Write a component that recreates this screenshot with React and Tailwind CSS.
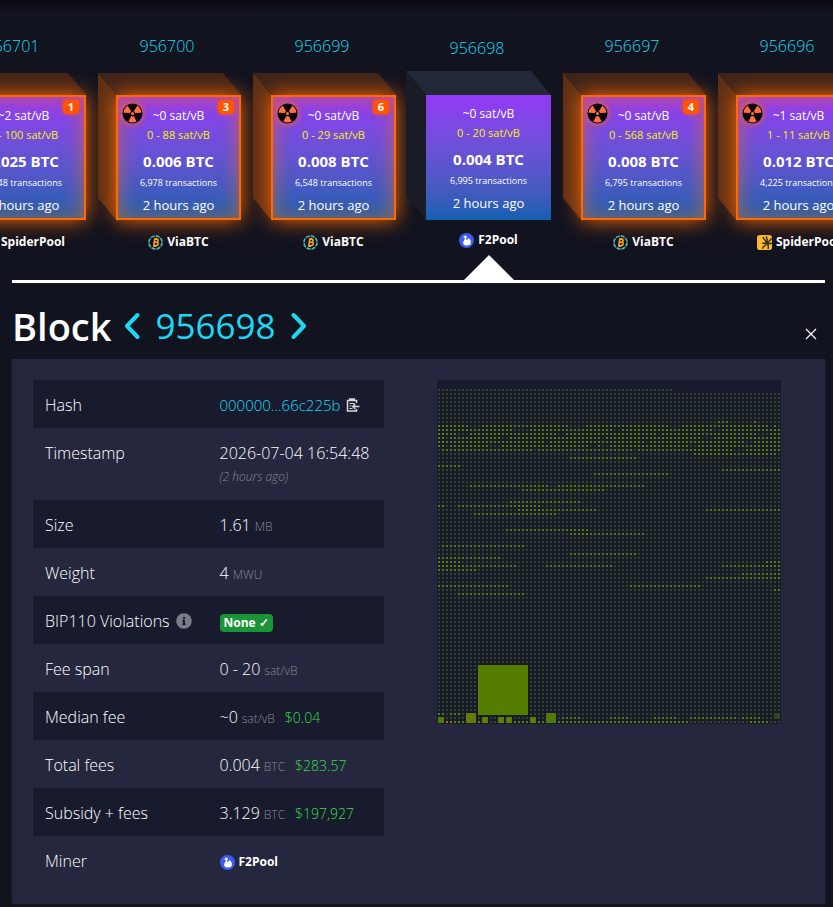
import React from 'react';
import { FaInfoCircle } from 'react-icons/fa';

const blocks = [
  { height: 956701, median: '~2', span: '0 - 100', reward: '0.025', txs: '5,148', pool: 'SpiderPool', violations: 1 },
  { height: 956700, median: '~0', span: '0 - 88', reward: '0.006', txs: '6,978', pool: 'ViaBTC', violations: 3 },
  { height: 956699, median: '~0', span: '0 - 29', reward: '0.008', txs: '6,548', pool: 'ViaBTC', violations: 6 },
  { height: 956698, median: '~0', span: '0 - 20', reward: '0.004', txs: '6,995', pool: 'F2Pool', violations: 0 },
  { height: 956697, median: '~0', span: '0 - 568', reward: '0.008', txs: '6,795', pool: 'ViaBTC', violations: 4 },
  { height: 956696, median: '~1', span: '1 - 11', reward: '0.012', txs: '4,225', pool: 'SpiderPool', violations: 2 },
];

// Block overview: an 86 x 86 grid, runs are [row, first column, last column]
const CELLS = 86;
const brightRuns = [
  [10, 70, 72], [10, 79, 79],
  [11, 0, 7], [11, 11, 32], [11, 37, 57], [11, 61, 82], [11, 84, 84],
  [12, 0, 18], [12, 23, 43], [12, 46, 68], [12, 71, 85],
  [13, 0, 4], [13, 8, 29], [13, 32, 54], [13, 56, 79], [13, 83, 85],
  [14, 0, 1], [14, 3, 15], [14, 18, 40], [14, 42, 65], [14, 69, 85],
  [15, 0, 26], [15, 28, 51], [15, 53, 76], [15, 79, 85],
  [16, 0, 1], [16, 3, 12], [16, 16, 37], [16, 40, 40], [16, 43, 62], [16, 65, 85],
  [17, 1, 23], [17, 25, 48], [17, 50, 73], [17, 77, 85],
  [18, 64, 84],
  [19, 33, 49],
  [21, 0, 5],
  [22, 71, 85],
  [23, 39, 57],
  [26, 8, 27], [26, 30, 51],
  [27, 21, 41],
  [30, 18, 35],
  [31, 0, 1], [31, 5, 25],
  [32, 20, 39], [32, 67, 85],
  [33, 9, 29],
  [37, 17, 37],
  [38, 33, 51],
  [41, 1, 21],
  [43, 33, 49],
  [44, 0, 15],
  [45, 0, 5], [45, 82, 85],
  [46, 0, 19], [46, 27, 43], [46, 71, 85],
  [47, 0, 9], [47, 85, 85],
  [48, 76, 85],
  [49, 67, 85],
  [51, 0, 17], [51, 48, 65],
  [52, 84, 85],
  [53, 5, 21],
  [83, 0, 1], [83, 3, 5],
  [84, 31, 35], [84, 43, 47], [84, 54, 59], [84, 63, 74], [84, 76, 80],
  [85, 4, 6], [85, 10, 10], [85, 19, 22], [85, 25, 62], [85, 78, 82],
];

// larger transactions, size in cells
const bigTxs = [
  { col: 10, row: 71, size: 13, fill: '#557d00' },
  { col: 0, row: 84, size: 2, fill: '#4e7c00' },
  { col: 7, row: 83, size: 3, fill: '#647b00' },
  { col: 11, row: 84, size: 2, fill: '#5f7c00' },
  { col: 15, row: 84, size: 2, fill: '#5c7d00' },
  { col: 17, row: 84, size: 2, fill: '#587d00' },
  { col: 23, row: 84, size: 2, fill: '#587d00' },
  { col: 27, row: 83, size: 3, fill: '#4e7c00' },
  { col: 84, row: 83, size: 2, fill: '#33461a' },
];

const dot = (col, row) => `M${col * 4 + 1} ${row * 4 + 1}h2v2h-2z`;

const buildDots = () => {
  const bright = new Set();
  brightRuns.forEach(([row, from, to]) => {
    for (let c = from; c <= to; c++) bright.add(row * CELLS + c);
  });
  const covered = (c, r) => bigTxs.some(t => c >= t.col && c < t.col + t.size && r >= t.row && r < t.row + t.size);
  let on = '';
  let off = '';
  for (let r = 2; r < CELLS; r++) {
    for (let c = 0; c < CELLS; c++) {
      if (r === 2 && c > 58) continue;
      if (covered(c, r)) continue;
      if (bright.has(r * CELLS + c)) on += dot(c, r);
      else off += dot(c, r);
    }
  }
  return { on, off };
};

const dots = buildDots();

const BlockOverview = () => (
  <svg viewBox="0 0 344 344" className="block w-full bg-[#181b2d]" role="img" aria-label="Block transactions">
    <path d={dots.off} fill="#33431b" />
    <path d={dots.on} fill="#587f04" />
    <path d={dot(2, 85)} fill="#a0710c" />
    <path d={dot(3, 85)} fill="#8a780a" />
    {bigTxs.map(t => (
      <rect key={`${t.col}-${t.row}`} x={t.col * 4 + 1} y={t.row * 4 + 1} width={t.size * 4 - 2} height={t.size * 4 - 2} fill={t.fill} />
    ))}
  </svg>
);

const ViaBtcIcon = () => (
  <svg viewBox="0 0 16 16" className="size-[15px]" fill="none">
    <circle cx="8" cy="8" r="7" stroke="#4fb3b5" strokeWidth="1.8" strokeDasharray="4.4 1.1" />
    <path d="M6.6 4.4h2.6c2.2 0 2 3 0 3.3c2.4.1 2.1 3.6-.3 3.6H5.4M7.2 4.6l-1 6.6M6.6 7.8h2.8M7.8 3.2l-.2 1.2M9.4 3.2l-.2 1.2M6.4 11.4l-.2 1.2M8 11.4l-.2 1.2" stroke="#f5a81c" strokeWidth="1.7" />
  </svg>
);

const F2PoolIcon = () => (
  <svg viewBox="0 0 16 16" className="size-[15px]">
    <circle cx="8" cy="8" r="8" fill="#3d5cf5" />
    <path d="M4.400 4.600 6 2.900c1.200-.5 2.300.4 2.200 1.600-.1.900-.7 1.500-.6 2.300l1 .6 1.500-2.300.5 1.400 1.200-.4-.1 1.500 1.300.7-.6.9c.8 1.600-.2 3.500-2.200 3.900-2 .4-4.600.2-5.500-1.400-.8-1.600.2-3.100 1.100-4.500.4-.8.600-1.700.2-2.200z" fill="#fff" />
  </svg>
);

const SpiderPoolIcon = () => (
  <svg viewBox="0 0 16 16" className="size-[15px]">
    <rect width="16" height="16" rx="3" fill="#fdbb25" />
    <path d="M6.500 2c.2 2 1.500 3 3.500 5M10.200 1.500c-.2 2 .3 3 1.300 4.500M15.500 3.500c-.5 2-2 2.500-3.500 4M16 9c-1.500-.5-2.500 0-4 .5M5.500 8.500c2 .6 3 .2 4.500.2M6 14.500c.5-2.500 2-3 4-4.500M11 10.500c1.500.8 1.300 2.500.8 4.500" stroke="#33302a" strokeWidth="1.500" fill="none" />
    <ellipse cx="11" cy="8.300" rx="1.800" ry="2.800" fill="#33302a" transform="rotate(-40 11 8.300)" />
  </svg>
);

const poolIcons = { ViaBTC: ViaBtcIcon, F2Pool: F2PoolIcon, SpiderPool: SpiderPoolIcon };

const Pool = ({ name }) => {
  const Icon = poolIcons[name];
  return (
    <a href="#pool" className="inline-flex items-center gap-1 text-xs font-bold leading-4 text-white">
      <Icon />
      {name}
    </a>
  );
};

const RadiationIcon = () => (
  <svg viewBox="0 0 22 22" className="size-[21px] rounded-full shadow-[0_0_6px_#ff6a00]">
    <circle cx="11" cy="11" r="10.500" fill="#0b0503" />
    <g fill="#ff7043">
      <path d="M9.600 8.600 6 2.900a9.400 9.400 0 0 0-4.300 7.300l6.600.2a2.800 2.800 0 0 1 1.300-1.800z" />
      <path d="M12.400 8.600 16 2.900a9.400 9.400 0 0 1 4.300 7.300l-6.600.2a2.800 2.800 0 0 0-1.300-1.800z" />
      <path d="M9.700 13.600 6.700 19.300a9.400 9.400 0 0 0 8.600 0l-3-5.700a2.900 2.900 0 0 1-2.600 0z" />
      <circle cx="11" cy="11" r="1.600" />
    </g>
  </svg>
);

const Cube = ({ flagged }) => (
  <svg viewBox="0 0 145 149" className="absolute -left-5 -top-6 h-[149px] w-[145px]">
    <path d="M0 0H125L145 24H20z" fill={flagged ? '#3f2319' : '#232838'} />
    <path d="M0 0 20 24V149L0 125z" fill={flagged ? '#5e2f15' : '#191c27'} />
  </svg>
);

const ChainBlock = ({ block }) => {
  const active = block.violations === 0;
  return (
    <div className={`flex w-[125px] shrink-0 flex-col items-center ${active ? 'pt-9' : 'pt-[34px]'}`}>
      <a href="#block" className="mr-[23px] text-base font-light leading-6 text-[#1bd8f4]">{block.height}</a>
      <div className={`relative w-full ${active ? 'mt-[35px]' : 'mt-[37px]'}`}>
        <div className={active ? 'absolute left-0 top-0' : 'absolute left-0.5 top-0.5'}>
          <Cube flagged={!active} />
        </div>
        <div className={`relative flex h-[125px] flex-col items-center whitespace-nowrap bg-linear-to-b from-[#9339f4] to-[#105fb0] pt-2.5 text-white ${active ? '' : 'border-2 border-[#ff6a00] shadow-[0_0_20px_#ff6a00,inset_0_0_20px_#ff6a0099]'}`}>
          <span className="text-xs leading-[18px]">{block.median} sat/vB</span>
          <span className="text-[11px] leading-5 text-[#fff000]">{block.span} sat/vB</span>
          <span className="mt-1 text-[15px] font-bold leading-6">{block.reward} BTC</span>
          <span className="text-[9px] leading-5">{block.txs} transactions</span>
          <span className="text-[13px] leading-6">2 hours ago</span>
          {!active && (
            <>
              <span className="absolute left-1 top-1.5"><RadiationIcon /></span>
              <span className="absolute right-[5px] top-[3px] flex h-3.5 w-4 items-center justify-center rounded bg-[#ff5500] text-[11px] font-bold shadow-[0_0_4px_#ff5500]">{block.violations}</span>
            </>
          )}
        </div>
      </div>
      <div className={`flex ${active ? 'mt-3' : 'mt-3.5'}`}>
        <Pool name={block.pool} />
      </div>
      {active && (
        <svg viewBox="0 0 50 25" className="mt-[7px] h-[25px] w-[50px] shrink-0">
          <path d="M25 0 50 25H0z" fill="#fff" />
        </svg>
      )}
    </div>
  );
};

const Unit = ({ children }) => <span className="ml-1 text-xs font-light text-[#878997]">{children}</span>;
const Fiat = ({ children }) => <span className="ml-2.5 text-sm font-light text-[#3bdc49]">{children}</span>;

const rows = [
  {
    label: 'Hash',
    value: (
      <span className="flex items-center gap-1.5">
        <a href="#hash" className="text-[15px] text-[#1bd8f4]">000000...66c225b</a>
        <button type="button" aria-label="Copy hash">
          <svg viewBox="0 0 14 14" className="size-3.5" fill="none" stroke="#d6d7dc" strokeWidth="1.500">
            <path d="M10.500 5V2.500H1.500V13H10.500V11" />
            <path d="M4 2.500V1.200h4v1.300" strokeWidth="2" />
            <path d="M3.500 5.500h5M3.500 8h2M3.500 10.500h3" strokeWidth="1" />
            <path d="M13.500 8.500H7M9.300 6 6.800 8.500l2.500 2.500" />
          </svg>
        </button>
      </span>
    ),
  },
  {
    label: 'Timestamp',
    value: (
      <>
        2026-07-04 16:54:48
        <i className="block text-xs leading-6 text-[#878997]">(2 hours ago)</i>
      </>
    ),
  },
  { label: 'Size', value: <>1.61<Unit>MB</Unit></> },
  { label: 'Weight', value: <>4<Unit>MWU</Unit></> },
  {
    label: (
      <span className="flex items-center gap-1.5">
        BIP110 Violations
        <FaInfoCircle size={16} className="text-[#7a7c8a]" />
      </span>
    ),
    value: <span className="inline-block rounded bg-[#1a9436] px-1 text-xs font-bold leading-[18px]">None ✓</span>,
  },
  { label: 'Fee span', value: <>0 - 20<Unit>sat/vB</Unit></> },
  { label: 'Median fee', value: <>~0<Unit>sat/vB</Unit><Fiat>$0.04</Fiat></> },
  { label: 'Total fees', value: <>0.004<Unit>BTC</Unit><Fiat>$283.57</Fiat></> },
  { label: 'Subsidy + fees', value: <>3.129<Unit>BTC</Unit><Fiat>$197,927</Fiat></> },
  { label: 'Miner', value: <span className="flex h-6 items-center pt-0.5"><Pool name="F2Pool" /></span> },
];

const Chevron = ({ d, label }) => (
  <a href="#block" aria-label={label}>
    <svg viewBox="0 0 18 28" className="h-7 w-[18px]" fill="none" stroke="#1bd8f4" strokeWidth="4" strokeLinecap="round" strokeLinejoin="round">
      <path d={d} />
    </svg>
  </a>
);

export default function App() {
  return (
    <div className="min-h-screen overflow-hidden bg-[#11131f] bg-[linear-gradient(#090a11,#11131f_12px)] font-['Open_Sans','Noto_Sans',sans-serif] text-white">
      <nav aria-label="Blockchain" className="-ml-[39px] flex h-[280px] gap-[30px]">
        {blocks.map(b => <ChainBlock key={b.height} block={b} />)}
      </nav>

      <main className="px-3 pb-[3px] pr-2">
        <div className="h-[3px] bg-white" />
        <header className="flex h-[76px] items-center justify-between pb-1 pt-3.5 pr-2">
          <h1 className="flex items-center text-[38px] font-semibold leading-[48px]">
            Block
            <span className="ml-3 flex items-center gap-3.5 text-[35px] font-normal text-[#1bd8f4]">
              <Chevron label="Previous block" d="M14.500 3 4 14l10.500 11" />
              <a href="#block">956698</a>
              <Chevron label="Next block" d="M3.500 3 14 14 3.500 25" />
            </span>
          </h1>
          <button type="button" aria-label="Close" className="mt-4">
            <svg viewBox="0 0 12 12" className="size-3" stroke="#fff" strokeWidth="1.200">
              <path d="M1 1l10 10M11 1 1 11" />
            </svg>
          </button>
        </header>

        <section className="grid min-h-[545px] grid-cols-[351fr_344fr] items-start gap-[53px] bg-[#24273e] pb-5 pl-[21px] pr-11 pt-[21px] shadow-[0_0_4px_#24273e66]">
          <table className="w-full table-fixed border-collapse text-base leading-6">
            <tbody>
              {rows.map((r, i) => (
                <tr key={i} className="odd:bg-[#181b2d]">
                  <th scope="row" className="w-1/2 whitespace-nowrap px-3 pb-[11px] pt-[13px] text-left align-top font-light">{r.label}</th>
                  <td className="w-1/2 whitespace-nowrap pb-[11px] pl-[11px] pt-[13px] align-top font-light">{r.value}</td>
                </tr>
              ))}
            </tbody>
          </table>
          <BlockOverview />
        </section>
      </main>
    </div>
  );
}
